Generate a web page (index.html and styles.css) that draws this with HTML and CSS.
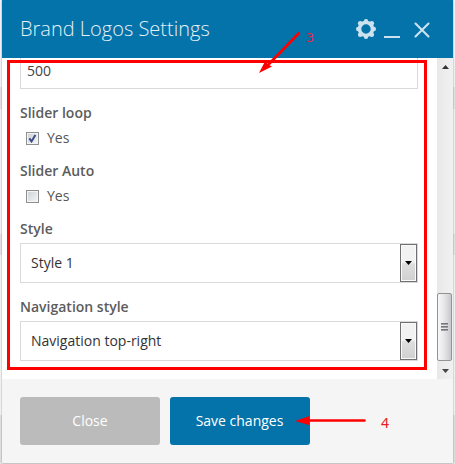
FILE: index.html
```
<!DOCTYPE html>
<html lang="en">
<head>
<meta charset="utf-8">
<title>Brand Logos Settings</title>
<link rel="stylesheet" href="styles.css">
</head>
<body>
<div class="dialog">
  <header class="header">
    <h1 class="title">Brand Logos Settings</h1>
    <div class="controls">
      <svg class="gear" width="20" height="20" viewBox="-10 -10 20 20"><g fill="#cce3ef"><circle r="2.2" cx="0" cy="-7.8"/><circle r="2.2" cx="0" cy="7.8"/><circle r="2.2" cx="-7.8" cy="0"/><circle r="2.2" cx="7.8" cy="0"/><circle r="2.3" cx="5.8" cy="-5.8"/><circle r="2.3" cx="-5.8" cy="-5.8"/><circle r="2.3" cx="5.8" cy="5.8"/><circle r="2.3" cx="-5.8" cy="5.8"/></g><circle r="6.5" fill="none" stroke="#cce3ef" stroke-width="3.6"/></svg>
      <span class="minimize"></span>
      <svg class="close" width="16" height="16" viewBox="0 0 16 16"><path d="M1.5 1.5l13 13M14.5 1.5l-13 13" stroke="#cce3ef" stroke-width="2.1" stroke-linecap="round"/></svg>
    </div>
  </header>
  <div class="body">
    <main class="fields">
      <div class="input">500</div>
      <div class="label first">Slider loop</div>
      <div class="check"><span class="box"><svg width="9" height="9" viewBox="0 0 9 9"><path d="M1.3 4.4l2.2 3L7.4 1" fill="none" stroke="#3b4d8b" stroke-width="2"/></svg></span><span class="caption">Yes</span></div>
      <div class="label">Slider Auto</div>
      <div class="check"><span class="box"></span><span class="caption">Yes</span></div>
      <div class="label">Style</div>
      <div class="select"><span class="value">Style 1</span><span class="drop"><svg width="7" height="4" viewBox="0 0 7 4"><path d="M0 0h7L3.5 4z"/></svg></span></div>
      <div class="label second">Navigation style</div>
      <div class="select"><span class="value">Navigation top-right</span><span class="drop"><svg width="7" height="4" viewBox="0 0 7 4"><path d="M0 0h7L3.5 4z"/></svg></span></div>
    </main>
    <div class="scrollbar">
      <svg width="7" height="4" viewBox="0 0 7 4"><path d="M0 4h7L3.5 0z" fill="#333"/></svg>
      <div class="thumb"><i></i><i></i><i></i></div>
      <svg class="down" width="7" height="4" viewBox="0 0 7 4"><path d="M0 0h7L3.5 4z" fill="#444"/></svg>
    </div>
  </div>
  <footer class="footer">
    <div class="button muted">Close</div>
    <div class="button primary">Save changes</div>
  </footer>
</div>
<svg class="notes" width="455" height="464" viewBox="0 0 455 464">
  <rect x="8.5" y="61.5" width="417" height="307" fill="none" stroke="#fe0000" stroke-width="3"/>
  <g stroke="#fe0000" stroke-width="2.6" stroke-linecap="round"><path d="M298.5 33.5L269 64"/><path d="M364.5 420.5H305"/></g>
  <path d="M259 73L265.5 60.5L267 63L269 65L272 66.5zM295 421L309 416.3V425z" fill="#fe0000"/>
  <text class="three" x="306" y="42">3</text>
  <text class="four" x="381" y="428">4</text>
</svg>
</body>
</html>
```
FILE: styles.css
```
* { box-sizing: border-box; }
body {
  margin: 0;
  width: 455px;
  height: 464px;
  overflow: hidden;
  background: linear-gradient(#f8f6f8 0 87px, #e9e5e9 87px 109px, #f7f5f7 109px 234px, #e9e5e9 234px 255px, #f7f7f7 255px 415px, #e4e4e4 415px);
  font-family: "Open Sans", "Noto Sans", sans-serif;
  font-size: 14px;
  color: #555;
}
.dialog {
  width: 451px;
  height: 463px;
  margin-left: 2px;
  background: #fff;
  box-shadow: 0 0 2px rgba(0, 0, 0, .4);
}
.header {
  height: 58px;
  padding: 0 23px 0 18px;
  background: #0473aa;
  display: flex;
  justify-content: space-between;
}
.title {
  margin: 0;
  font-size: 20px;
  line-height: 58px;
  font-weight: 300;
  color: #e4f1f7;
  white-space: nowrap;
}
.controls { display: flex; align-items: flex-start; }
.gear { margin-top: 19px; }
.minimize { width: 16px; height: 2px; margin: 36px 14px 0 8px; background: #cce3ef; }
.close { margin-top: 22px; }
.body { height: 321px; display: flex; justify-content: space-between; }
.fields { width: 416px; padding-left: 18px; }
.input {
  height: 31px;
  padding-left: 6px;
  border: 1px solid #d9d9dd;
  border-top: 0;
  line-height: 26px;
  color: #444;
}
.label { margin-top: 13px; height: 20px; line-height: 20px; font-weight: 600; color: #5c5c5c; }
.label.first, .label.second { margin-top: 14px; }
.check { margin-top: 5px; height: 20px; padding-left: 6px; display: flex; align-items: center; gap: 8px; }
.caption, .value { padding-bottom: 2px; }
.box {
  width: 13px;
  height: 13px;
  border: 1px solid #8e8f8f;
  background: linear-gradient(135deg, #ccd0d5, #f6f6f6);
  box-shadow: inset 0 0 0 1px #f4f4f4;
  display: flex;
  align-items: center;
  justify-content: center;
}
.select {
  margin-top: 4px;
  height: 40px;
  padding-left: 10px;
  border: 1px solid #d9d9d9;
  display: flex;
  align-items: center;
  justify-content: space-between;
  color: #333;
}
.drop {
  width: 17px;
  height: 38px;
  border: 1px solid #707070;
  background: linear-gradient(#f2f2f2 0 48%, #dedede 52%, #d0d0d0);
  box-shadow: inset 0 0 0 1px #fafafa;
  display: flex;
  align-items: center;
  justify-content: center;
}
.scrollbar {
  width: 16px;
  padding: 7px 0 6px;
  background: linear-gradient(90deg, #e8e8e8, #f1f1f1);
  display: flex;
  flex-direction: column;
  align-items: center;
}
.thumb {
  width: 15px;
  height: 68px;
  margin: auto 1px 0 0;
  border: 1px solid #929292;
  border-radius: 2px;
  background: linear-gradient(90deg, #f7f7f7, #e7e7e9 45%, #c8c9cc);
  display: flex;
  flex-direction: column;
  align-items: center;
  justify-content: center;
  gap: 1px;
}
.thumb i { width: 7px; height: 2px; background: #73767a; border-bottom: 1px solid #a0a0a0; }
.down { margin-top: 8px; }
.footer { height: 84px; padding: 18px; background: #f5f5f5; display: flex; gap: 10px; }
.button {
  width: 140px;
  height: 48px;
  border-radius: 3px;
  color: #fff;
  line-height: 48px;
  text-align: center;
}
.muted { background: #bbb; }
.primary { background: #0473aa; padding-right: 1px; }
.notes { position: absolute; left: 0; top: 0; }
.three { fill: #f0203a; font: 13px "DejaVu Sans Mono", monospace; }
.four { fill: #e8201c; font: 14px "Noto Sans", sans-serif; }
```
